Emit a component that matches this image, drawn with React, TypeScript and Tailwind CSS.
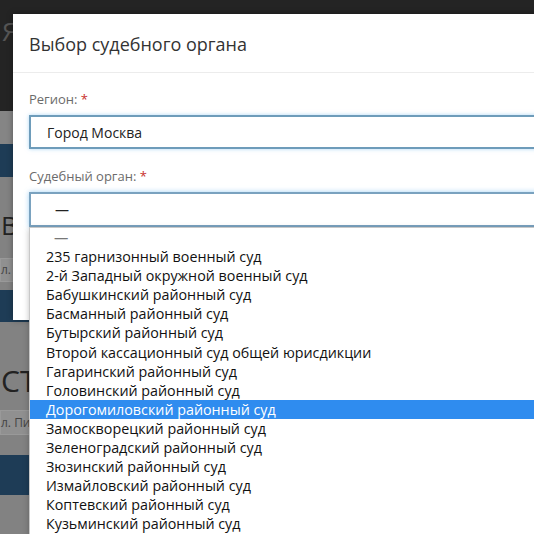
import React from 'react';

const courts = [
  '—',
  '235 гарнизонный военный суд',
  '2-й Западный окружной военный суд',
  'Бабушкинский районный суд',
  'Басманный районный суд',
  'Бутырский районный суд',
  'Второй кассационный суд общей юрисдикции',
  'Гагаринский районный суд',
  'Головинский районный суд',
  'Дорогомиловский районный суд',
  'Замоскворецкий районный суд',
  'Зеленоградский районный суд',
  'Зюзинский районный суд',
  'Измайловский районный суд',
  'Коптевский районный суд',
  'Кузьминский районный суд',
];

const selected = 'Дорогомиловский районный суд';

const Label: React.FC<{ text: string }> = ({ text }) => (
  <div className="text-[13px] leading-[18px] text-[#6b6b6b]">
    {text} <span className="text-[#c9302c]">*</span>
  </div>
);

export default function App() {
  return (
    <div
      className="relative w-[534px] h-[534px] overflow-hidden bg-[#828282]"
      style={{ fontFamily: '"Open Sans", "Noto Sans", sans-serif' }}
    >
      {/* Page behind the backdrop */}
      <div className="flex flex-col">
        <div className="h-[111px] bg-[#242424] px-[2px] pt-[14px] text-[26px] leading-[34px] text-[#555]">Я</div>
        <div className="h-[33px] bg-[#858585]" />
        <div className="h-[33px] bg-[#1e3c56]" />
        <div className="h-[33px]" />
        <div className="h-[30px] pl-[1px] text-[26px] leading-[30px] text-[#222]">В</div>
        <div className="mt-[18px] h-[24px] w-[40px] border border-[#999] bg-[#909090] text-[12px] leading-[22px] text-[#444]">л. П</div>
        <div className="mt-[8px] h-[32px] bg-[#1e3c56]" />
        <div className="mt-[43px] h-[32px] pl-[1px] text-[30px] leading-[32px] text-[#222]">СТ</div>
        <div className="mt-[13px] h-[25px] w-[40px] border border-[#999] bg-[#909090] text-[12px] leading-[23px] text-[#444]">л. Пи</div>
        <div className="mt-[20px] h-[40px] bg-[#1e3c56]" />
      </div>

      {/* Modal */}
      <div className="absolute left-[13px] top-[14px] w-[560px] h-[306px] bg-white shadow-[0_0_6px_rgba(0,0,0,0.35)]">
        <div className="h-[59px] border-b border-[#ececec] px-[16px] pt-[16px] text-[18px] leading-[28px] text-[#333]">
          Выбор судебного органа
        </div>
        <div className="px-[16px] pt-[17px]">
          <Label text="Регион:" />
          <div className="mt-[7px] flex h-[34px] items-center border-2 border-[#6e9cba] bg-white pl-[16px] text-[14px] text-[#222] shadow-[0_0_4px_rgba(120,190,240,0.6)]">
            Город Москва
          </div>
          <div className="mt-[18px]">
            <Label text="Судебный орган:" />
          </div>
          <div className="relative mt-[7px]">
            <div className="flex h-[35px] items-center border-2 border-[#7aa2bf] bg-white pl-[24px] text-[14px] text-[#222] shadow-[0_0_5px_rgba(120,190,240,0.7)]">
              —
            </div>
            <div className="absolute left-0 top-[35px] w-full border border-[#c8c8c8] bg-white shadow-[0_2px_6px_rgba(0,0,0,0.25)]">
              {courts.map((c) => (
                <div
                  key={c}
                  className={
                    c === selected
                      ? 'h-[19.1px] bg-[#2f8cef] pl-[16px] text-[14.3px] leading-[19px] text-white'
                      : 'h-[19.1px] pl-[16px] text-[14.3px] leading-[19px] text-[#111]'
                  }
                >
                  {c === '—' ? <span className="pl-[8px] text-[#777]">—</span> : c}
                </div>
              ))}
            </div>
          </div>
        </div>
      </div>
    </div>
  );
}
